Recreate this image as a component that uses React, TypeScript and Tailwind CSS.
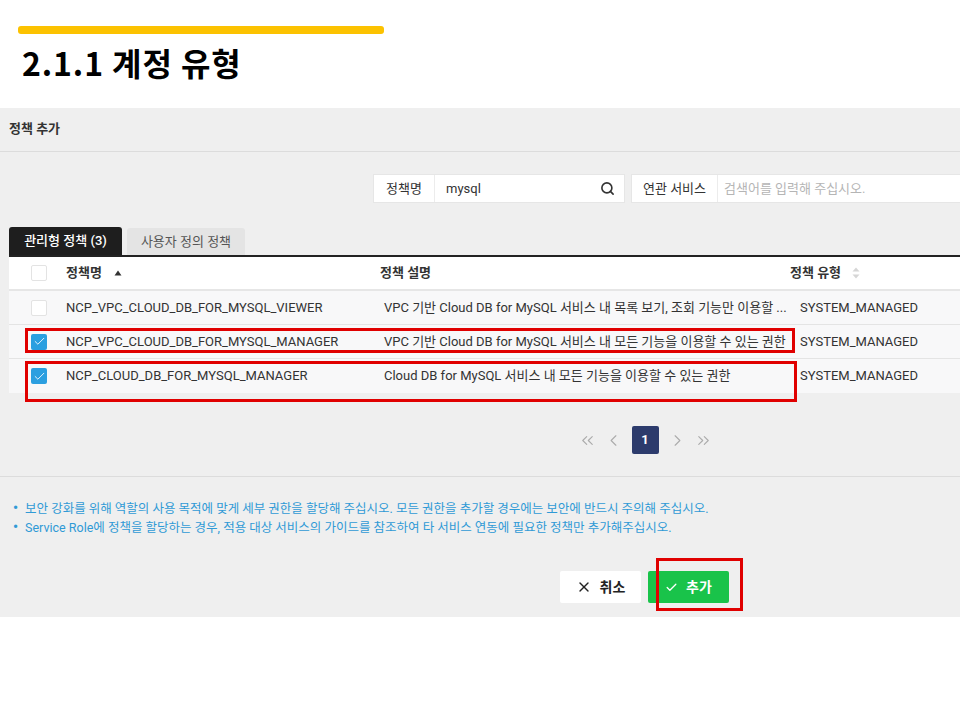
import React from "react";
import { Search, X, Check, ChevronsLeft, ChevronLeft, ChevronRight, ChevronsRight } from "lucide-react";

const UI = "font-['Roboto','Noto_Sans_CJK_KR',sans-serif]";

function Box({ checked }: { checked?: boolean }) {
  return checked ? (
    <div className="w-4 h-4 rounded-[2px] bg-[#2b9fe0] flex items-center justify-center">
      <Check size={13} strokeWidth={1.6} color="#fff" />
    </div>
  ) : (
    <div className="w-4 h-4 rounded-[2px] bg-white border border-[#e3e3e3]" />
  );
}

const rows = [
  {
    name: "NCP_VPC_CLOUD_DB_FOR_MYSQL_VIEWER",
    desc: "VPC 기반 Cloud DB for MySQL 서비스 내 목록 보기, 조회 기능만 이용할 ...",
    checked: false,
  },
  {
    name: "NCP_VPC_CLOUD_DB_FOR_MYSQL_MANAGER",
    desc: "VPC 기반 Cloud DB for MySQL 서비스 내 모든 기능을 이용할 수 있는 권한",
    checked: true,
  },
  {
    name: "NCP_CLOUD_DB_FOR_MYSQL_MANAGER",
    desc: "Cloud DB for MySQL 서비스 내 모든 기능을 이용할 수 있는 권한",
    checked: true,
  },
];

export default function App() {
  return (
    <div className={`relative w-[960px] h-[720px] overflow-hidden bg-white ${UI}`}>
      <div className="pt-[26px] pl-[18px]">
        <div className="w-[366px] h-[8px] rounded-[3px] bg-[#fcc200]" />
      </div>
      <h1 className="mt-[8px] ml-[22px] h-[40px] leading-[40px] text-[32px] font-bold text-black font-['Noto_Sans_CJK_KR',sans-serif] tracking-[0.9px]">
        2.1.1 계정 유형
      </h1>
      <div className="mt-[26px] h-[509px] bg-[#efefef] flex flex-col">
        <div className="h-[44px] border-b border-[#dcdcdc] pl-[9px] pt-[8px]">
          <span className="text-[13px] leading-[20px] font-bold text-[#333]">정책 추가</span>
        </div>

        {/* search row */}
        <div className="mt-[23px] flex justify-end h-[27px] text-[13px] text-[#333]">
          <div className="flex shadow-[0_0_0_1px_#e6e6e6]">
            <div className="w-[61px] bg-white border-r border-[#ececec] flex items-center justify-center">정책명</div>
            <div className="w-[189px] bg-white flex items-center justify-between pl-[11px] pr-[9px]">
              <span>mysql</span>
              <Search size={15} strokeWidth={2.6} color="#333" />
            </div>
          </div>
          <div className="ml-[8px] flex shadow-[0_0_0_1px_#e6e6e6]">
            <div className="w-[86px] bg-white border-r border-[#ececec] flex items-center justify-center">연관 서비스</div>
            <div className="w-[242px] bg-white flex items-center pl-[6px] text-[#b5b5b5]">검색어를 입력해 주십시오.</div>
          </div>
        </div>

        {/* tabs */}
        <div className="mt-[25px] ml-[9px] flex items-end gap-[5px] h-[28px]">
          <div className="w-[113px] h-[28px] rounded-t-[3px] bg-[#1e1e1e] text-white text-[13px] font-medium flex items-center justify-center">
            관리형 정책 (3)
          </div>
          <div className="w-[118px] h-[27px] rounded-t-[3px] bg-[#e4e4e4] text-[#555] text-[13px] flex items-center justify-center">
            사용자 정의 정책
          </div>
        </div>

        {/* table */}
        <div className="ml-[9px] border-t-2 border-[#222] text-[13px] text-[#333]">
          <div className="h-[34px] bg-white border-b-2 border-[#e6e6e6] flex items-center">
            <div className="pl-[22px] w-[57px]"><Box /></div>
            <div className="w-[314px] flex items-center gap-[12px] font-bold">
              <span>정책명</span>
              <svg width="8" height="6" viewBox="0 0 8 6"><path d="M4 0.5 L7.5 5.5 H0.5 Z" fill="#333" /></svg>
            </div>
            <div className="w-[410px] font-bold">정책 설명</div>
            <div className="flex items-center gap-[11px] font-bold">
              <span>정책 유형</span>
              <svg width="8" height="12" viewBox="0 0 8 12">
                <path d="M4 0.5 L7.5 4.5 H0.5 Z" fill="#d6d6d6" />
                <path d="M4 11.5 L7.5 7.5 H0.5 Z" fill="#d6d6d6" />
              </svg>
            </div>
          </div>
          {rows.map((r, i) => (
            <div
              key={i}
              className={`h-[34px] bg-[#f8f8f9] flex items-center ${i < rows.length - 1 ? "border-b border-[#e4e4e4]" : ""}`}
            >
              <div className="pl-[22px] w-[57px]"><Box checked={r.checked} /></div>
              <div className="w-[314px] whitespace-nowrap">{r.name}</div>
              <div className="w-[410px] pl-[4px] whitespace-nowrap overflow-hidden">{r.desc}</div>
              <div className="pl-[10px]">SYSTEM_MANAGED</div>
            </div>
          ))}
        </div>

        {/* pagination */}
        <div className="mt-[33px] flex items-center justify-center pl-[330px] text-[#ababab]">
          <ChevronsLeft size={19} strokeWidth={1.4} />
          <ChevronLeft size={19} strokeWidth={1.4} className="ml-[7px]" />
          <div className="ml-[9px] w-[27px] h-[28px] rounded-[2px] bg-[#2c3b6c] text-white text-[13px] font-bold flex items-center justify-center">
            1
          </div>
          <ChevronRight size={19} strokeWidth={1.4} className="ml-[9px]" />
          <ChevronsRight size={19} strokeWidth={1.4} className="ml-[7px]" />
        </div>

        <div className="mt-[22px] border-t border-[#dcdcdc]" />

        {/* notes */}
        <ul className="mt-[22px] pl-[13px] text-[12.5px] leading-[19px] text-[#2f9ad6]">
          <li className="flex gap-[7px]"><span className="text-[14px] font-bold">•</span><span>보안 강화를 위해 역할의 사용 목적에 맞게 세부 권한을 할당해 주십시오. 모든 권한을 추가할 경우에는 보안에 반드시 주의해 주십시오.</span></li>
          <li className="flex gap-[7px]"><span className="text-[14px] font-bold">•</span><span>Service Role에 정책을 할당하는 경우, 적용 대상 서비스의 가이드를 참조하여 타 서비스 연동에 필요한 정책만 추가해주십시오.</span></li>
        </ul>

        {/* buttons */}
        <div className="mt-[34px] flex justify-end gap-[7px] pr-[231px]">
          <button className="w-[81px] h-[32px] bg-white rounded-[2px] flex items-center justify-center gap-[8px] text-[14px] font-bold text-[#222]">
            <X size={16} strokeWidth={2} />
            <span>취소</span>
          </button>
          <button className="w-[81px] h-[32px] bg-[#19c34a] rounded-[2px] flex items-center justify-center gap-[8px] text-[14px] font-bold text-white">
            <Check size={13} strokeWidth={2.4} />
            <span>추가</span>
          </button>
        </div>
      </div>

      {/* red annotation boxes */}
      <div className="absolute left-[25px] top-[328px] w-[770px] h-[25px] border-[3px] border-[#e00000]" />
      <div className="absolute left-[25px] top-[361px] w-[772px] h-[41px] border-[3px] border-[#e00000]" />
      <div className="absolute left-[656px] top-[558px] w-[87px] h-[53px] border-[3px] border-[#e00000]" />
    </div>
  );
}
